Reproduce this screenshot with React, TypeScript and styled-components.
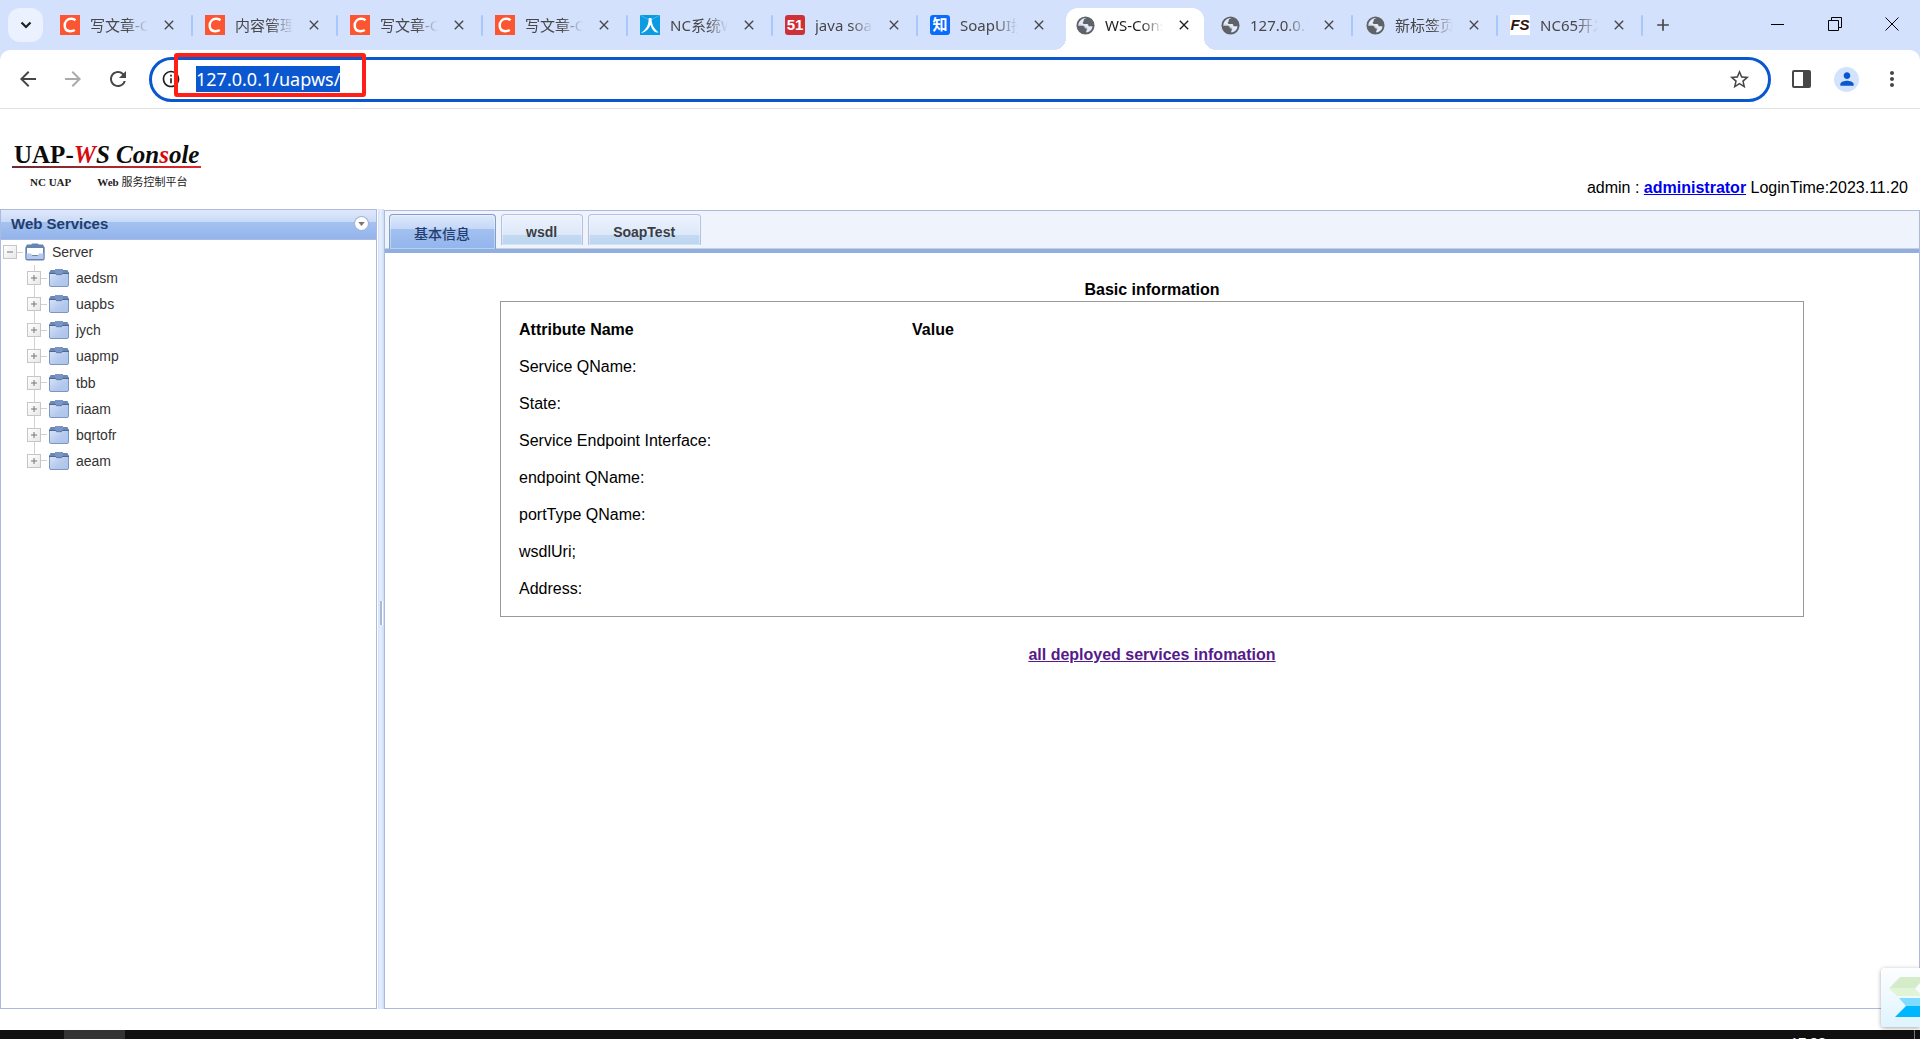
import React from "react";
import styled, { createGlobalStyle } from "styled-components";
import {
  MdAdd,
  MdArrowBack,
  MdArrowForward,
  MdClose,
  MdInfoOutline,
  MdMoreVert,
  MdPerson,
  MdRefresh,
  MdStarBorder,
} from "react-icons/md";

const UI_FONT = `"Noto Sans", "Noto Sans CJK SC", sans-serif`;
const PAGE_FONT = `"Liberation Sans", "Noto Sans CJK SC", sans-serif`;
const SERIF_FONT = `"Liberation Serif", "Noto Sans CJK SC", serif`;

const LINE = "#aeb9e0";
const SOFT_LINE = "#b9bfe2";

const Global = createGlobalStyle`
  *, *::before, *::after { box-sizing: border-box; }
  body { margin: 0; background: #fff; font-family: ${PAGE_FONT}; color: #000; }
  button { border: 0; padding: 0; background: none; font: inherit; color: inherit; }
`;

const Screen = styled.div`
  display: flex;
  flex-direction: column;
  height: 100vh;
  overflow: hidden;
`;

/* ---------- browser chrome ---------- */

const TabStrip = styled.div`
  display: flex;
  align-items: stretch;
  flex: none;
  height: 50px;
  padding-left: 8px;
  background: #d3e1fd;
`;

const TabSearch = styled.button`
  display: grid;
  place-items: center;
  flex: none;
  width: 35px;
  height: 34px;
  margin: 8px 5px 0 0;
  border-radius: 12px;
  background: #ebf1fe;
`;

const Tab = styled.div<{ $active?: boolean; $divider?: boolean }>`
  position: relative;
  display: flex;
  align-items: center;
  flex: 0 1 145px;
  min-width: 0;
  height: 50px;
  padding: 0 8px 0 12px;
  isolation: isolate;
  color: ${(p) => (p.$active ? "#1f1f1f" : "#474747")};

  &::before {
    content: "";
    position: absolute;
    z-index: -1;
    display: ${(p) => (p.$active ? "block" : "none")};
    inset: 8px 4px 0 3px;
    border-radius: 12px 12px 0 0;
    background: #fff;
  }

  &::after {
    content: "";
    position: absolute;
    z-index: -1;
    ${(p) =>
      p.$active
        ? `
      bottom: 0; left: -9px; right: -8px; height: 12px;
      background:
        radial-gradient(circle at 0 0, transparent 12px, #fff 12px) left / 12px 12px no-repeat,
        radial-gradient(circle at 100% 0, transparent 12px, #fff 12px) right / 12px 12px no-repeat;`
        : `
      display: ${p.$divider ? "block" : "none"};
      top: 15px; right: 0; width: 2px; height: 21px;
      border-radius: 1px;
      background: #a8c7fa;`}
  }
`;

const Favicon = styled.span`
  display: grid;
  place-items: center;
  flex: none;
  width: 20px;
  height: 20px;
  margin-right: 10px;
`;

const TabTitle = styled.span`
  flex: 1;
  min-width: 0;
  overflow: hidden;
  white-space: nowrap;
  font: 15px/24px ${UI_FONT};
  mask-image: linear-gradient(90deg, #000 62%, transparent 100%);
`;

const TabClose = styled.button`
  display: grid;
  place-items: center;
  flex: none;
  width: 16px;
  height: 20px;
  margin: 0 8px 0 13px;
`;

const NewTab = styled.button`
  display: grid;
  place-items: center;
  width: 40px;
  height: 50px;
  color: #474747;
`;

const WindowButtons = styled.div`
  display: flex;
  margin-left: auto;
`;

const WindowButton = styled.button`
  display: grid;
  place-items: center;
  width: 57px;
  height: 48px;
`;

const Toolbar = styled.div`
  display: flex;
  align-items: center;
  flex: none;
  height: 59px;
  padding: 0 6px 0 5px;
  border-bottom: 1px solid #dfe1e5;
  background: #fff;
  box-shadow: 0 -8px 0 #d3e1fd;
  border-radius: 10px 10px 0 0;
`;

const ToolButton = styled.button<{ $muted?: boolean }>`
  display: grid;
  place-items: center;
  flex: none;
  width: 45px;
  height: 40px;
  color: ${(p) => (p.$muted ? "#aaa" : "#474747")};
`;

const Omnibox = styled.div`
  position: relative;
  display: flex;
  align-items: center;
  flex: 1;
  height: 45px;
  margin: 0 8px 0 9px;
  padding: 0 17px 0 9px;
  border: 3px solid #0b57d0;
  border-radius: 23px;
`;

const SiteInfo = styled.button`
  display: grid;
  width: 20px;
  height: 20px;
  margin-right: 15px;
  color: #1f1f1f;
`;

const Address = styled.input`
  field-sizing: content;
  height: 26px;
  margin-right: auto;
  padding: 0;
  border: 0;
  outline: 0;
  background: #0b57d0;
  color: #fff;
  font: 18px/26px ${UI_FONT};
`;

const BookmarkButton = styled.button`
  display: grid;
  color: #474747;
`;

/* red annotation frame drawn over the address */
const Highlight = styled.span`
  position: absolute;
  top: -7px;
  left: 22px;
  width: 192px;
  height: 44px;
  border: 4px solid #ff1f17;
  border-radius: 3px;
  pointer-events: none;
`;

const Avatar = styled.span`
  display: grid;
  place-items: center;
  width: 25px;
  height: 25px;
  border-radius: 50%;
  background: #d3e3fd;
  color: #0b57d0;
`;

/* ---------- console page ---------- */

const PageHeader = styled.header`
  display: flex;
  justify-content: space-between;
  align-items: flex-end;
  flex: none;
  height: 100px;
  padding: 0 12px;
`;

const Logo = styled.div`
  width: 189px;
  padding-bottom: 19px;
  font-family: ${SERIF_FONT};
  font-weight: bold;
`;

const LogoTitle = styled.div`
  padding-left: 2px;
  border-bottom: 2px solid;
  border-image: linear-gradient(90deg, #6b2a30, #e0262c) 1;
  font-size: 25px;
  line-height: 22px;
  white-space: nowrap;
  color: #0c0c0c;
`;

const Red = styled.span`
  color: #d9090f;
`;

const LogoSub = styled.div`
  display: flex;
  gap: 26px;
  padding: 6px 0 0 18px;
  font-size: 11px;
  line-height: 16px;
  white-space: nowrap;
  color: #222;
`;

const Chinese = styled.span`
  font-weight: normal;
`;

const Login = styled.div`
  padding-bottom: 11px;
  font-size: 16px;
  line-height: 20px;

  a { font-weight: bold; color: #00e; }
`;

const Workspace = styled.main`
  display: flex;
  flex: 1;
  min-height: 0;
  margin-bottom: 21px;
`;

const Sidebar = styled.nav`
  flex: none;
  width: 377px;
  border: 1px solid ${LINE};
`;

const SidebarHeader = styled.div`
  display: flex;
  justify-content: space-between;
  align-items: center;
  height: 30px;
  padding: 0 8px 2px 10px;
  border-bottom: 1px solid ${LINE};
  background: linear-gradient(#dfe8fa, #c8daf8 43%, #a4c2f0 43%, #92b4ec);
`;

const SidebarTitle = styled.h2`
  margin: 0;
  font-size: 15px;
  line-height: 20px;
  color: #233d6d;
`;

const CollapseButton = styled.button`
  display: grid;
  place-items: center;
  width: 13px;
  height: 13px;
  border-radius: 50%;
  background: #fff;
  box-shadow: 0 0 0 1px #a7b4cf;
`;

const Tree = styled.ul`
  display: grid;
  grid-auto-rows: 1fr;
  height: 235px;
  margin: -1px 0 0;
  padding: 0;
  list-style: none;
`;

const TreeRow = styled.li<{ $child?: boolean }>`
  position: relative;
  display: flex;
  align-items: center;
  padding-left: ${(p) => (p.$child ? 26 : 2)}px;
  font-size: 14px;
  color: #333;

  &::before {
    content: "";
    position: absolute;
    display: ${(p) => (p.$child ? "block" : "none")};
    top: 0;
    bottom: 0;
    left: 33px;
    width: 1px;
    background: #d2d2d2;
  }

  &:last-child::before { bottom: 50%; }
`;

const Toggle = styled.button`
  position: relative;
  display: grid;
  place-items: center;
  width: 14px;
  height: 14px;
  border: 1px solid #c6c6c6;
  background: linear-gradient(135deg, #fff, #e8e8e8);
`;

const Branch = styled.span`
  width: 6px;
  height: 1px;
  margin-right: 2px;
  background: #d2d2d2;
`;

const TreeLabel = styled.span`
  margin-left: 7px;
`;

const Splitter = styled.div`
  display: grid;
  place-items: center;
  flex: none;
  width: 6px;
  margin-left: 1px;
  padding-top: 8px;
  background: linear-gradient(90deg, #d3e0f7, #e9f0fd 40%, #cbdcf6);
`;

const Grip = styled.span`
  width: 3px;
  height: 24px;
  border-right: 1px solid #fff;
  background: #aabad6;
`;

const Content = styled.section`
  flex: 1;
  min-width: 0;
  margin-top: 1px;
  border: 1px solid ${LINE};
`;

const ContentTabs = styled.div`
  display: flex;
  align-items: flex-start;
  gap: 5px;
  height: 42px;
  padding: 3px 4px 0;
  border-bottom: 4px solid #8fb0df;
  background: #eff3fc;
  box-shadow: inset 0 -1px 0 #c9cfdb;
`;

const ContentTab = styled.button<{ $active?: boolean }>`
  height: ${(p) => (p.$active ? 35 : 31)}px;
  padding: 3px 25px 0 24px;
  border: 1px solid ${(p) => (p.$active ? "#829fca" : SOFT_LINE)};
  border-bottom: 0;
  border-radius: 4px 4px 0 0;
  background: ${(p) =>
    p.$active
      ? "linear-gradient(#dfe8fa, #c4d7f7 42%, #a2c0f0 42%, #93b5ed)"
      : "linear-gradient(#eef2fd, #dce8f8 66%, #c4daf2 66%, #bcd5ef)"};
  box-shadow: inset 0 0 0 1px rgba(255, 255, 255, 0.35);
  font-size: 14px;
  font-weight: ${(p) => (p.$active ? 500 : "bold")};
  line-height: 20px;
  color: ${(p) => (p.$active ? "#233d6d" : "#3a3d44")};
`;

const Info = styled.div`
  width: 85%;
  margin: 0 auto;
  padding-top: 27px;
  font-size: 16px;
  line-height: 20px;
  text-align: center;
`;

const InfoTitle = styled.h3`
  margin: 0;
  font-size: 16px;
  line-height: 20px;
`;

const InfoBox = styled.div`
  margin: 1px 0 28px;
  padding: 9px 17px;
  border: 1px solid #999;
`;

const InfoTable = styled.table`
  width: 100%;
  border-collapse: collapse;
  table-layout: fixed;
  text-align: left;

  th, td { height: 37px; padding: 0 1px; font-size: 16px; line-height: 20px; }
  th:first-child { width: 31%; }
`;

const DeployedLink = styled.a`
  font-weight: bold;
  color: #551a8b;
`;

const Widget = styled.button`
  position: fixed;
  right: 0;
  bottom: 12px;
  width: 39px;
  height: 59px;
  overflow: hidden;
  border-radius: 4px 0 0 4px;
  background: linear-gradient(#fdfeff, #dff4ff);
  box-shadow: 0 1px 4px rgba(0, 0, 0, 0.35);
`;

const Taskbar = styled.footer`
  display: flex;
  flex: none;
  height: 9px;
  overflow: hidden;
  background: #101010;
`;

const TaskbarApp = styled.span`
  width: 61px;
  margin-left: 64px;
  background: #333;
`;

const Clock = styled.time`
  margin: 3px 88px 0 auto;
  font: 14px/20px ${UI_FONT};
  color: #fff;
`;

const ShowDesktop = styled.span`
  width: 6px;
  border-left: 1px solid #777;
`;

/* ---------- drawings ---------- */

const GlobeIcon = () => (
  <svg width="19" height="19" viewBox="0 0 20 20" aria-hidden="true">
    <circle cx="10" cy="10" r="9.5" fill="#5f6368" />
    <path
      fill="#e4eafa"
      d="M11 2.500c-2 .2-3.300 1.200-2.900 2.400.2.900-.9 1.300-1 2.200 0 1 .9 1.300 2 1.300h2.700c1 0 1.300.8 1.200 1.600 0 .8.700 1 1.700.8 1-.2 1.800-.1 2.700.2-.4 3.200-3 5.900-6.300 6.300-.8-.7-.5-1.500 0-2.200.6-.9.100-1.800-.9-2-1.200-.2-1.400-1-1.600-1.800-.2-.8-1-.9-2-.9L2.500 10.400c-.1-3.700 1.500-5.400 3-6.500C7 2.800 9 2.300 11 2.500z"
    />
    <path
      fill="#5f6368"
      d="M3 9.500c1.800-.4 4-.3 5.500.5 1.300.7 1.300 1.900 2.500 2.200 1.500.4 1.300 2 .4 3l-1.700 3-4-1.200c-.2-1.500-.7-2.300-1.700-3.200C2.800 12.600 2.500 11 3 9.500z"
      opacity=".35"
    />
  </svg>
);

const CsdnIcon = () => (
  <svg width="20" height="20" viewBox="0 0 20 20" aria-hidden="true">
    <rect width="20" height="20" fill="#fc5531" />
    <path
      d="M15.500 5.200C14.300 4.200 13 3.800 11.300 3.800 7.300 3.800 4.700 6.700 4.700 10.600c0 3.400 2.100 5.600 5.600 5.600 1.700 0 3.200-.4 4.500-1.200"
      fill="none"
      stroke="#fff"
      strokeWidth="2.500"
    />
  </svg>
);

const PersonLogo = () => (
  <svg width="20" height="20" viewBox="0 0 20 20" aria-hidden="true">
    <rect width="20" height="20" fill="#0a9be3" />
    <path d="M0 0l9 5M20 0l-9 5" stroke="#5dc0f0" strokeWidth=".7" />
    <path
      fill="#fff"
      d="M8.700 3h2.800c.1 5.500 1.800 10.200 7 14.300-1.500.3-2.700.2-3.500-.3-2.300-2-3.800-4.400-4.600-7.300C9.400 13.200 6.800 16 2 18l-.6-.5C6.500 14 8.800 9.500 8.700 3z"
    />
  </svg>
);

const Badge = styled.span<{ $bg: string; $fg: string; $size: number }>`
  display: grid;
  place-items: center;
  width: 20px;
  height: 20px;
  border-radius: 3px;
  background: ${(p) => p.$bg};
  color: ${(p) => p.$fg};
  font: bold ${(p) => p.$size}px/20px ${PAGE_FONT};
`;

const ScriptBadge = styled(Badge)`
  border-radius: 0;
  font-style: italic;
`;

const ServerIcon = () => (
  <svg width="20" height="18" viewBox="0 0 20 18" aria-hidden="true">
    <path d="M2 1.500h4L7.500.5h5l1.500 1h4l1.700 3v11a2 2 0 0 1-2 2H2.300a2 2 0 0 1-2-2v-11z" fill="#6684b3" />
    <path d="M2 5h16v7H2z" fill="#fff" />
    <path d="M1.500 10.500H6l1.500 2.500h5l1.500-2.500h4.500V16h-17z" fill="#b4c9ec" />
  </svg>
);

const FolderIcon = () => (
  <svg width="20" height="18" viewBox="0 0 20 18" aria-hidden="true">
    <defs>
      <linearGradient id="folderFill" x1="0" y1="0" x2="1" y2="1">
        <stop offset="0" stopColor="#dbe6f9" />
        <stop offset=".6" stopColor="#b4c9ed" />
        <stop offset="1" stopColor="#adc3ea" />
      </linearGradient>
    </defs>
    <rect x=".5" y="2.500" width="19" height="15" rx="1.500" fill="url(#folderFill)" stroke="#7c96bf" />
    <path d="M1.500 1h17l1.500 4H0z" fill="#6a88b6" />
    <path d="M0 4.500h20" stroke="#4f6993" />
    <path d="M6 0h8v4l-1.500 1.700h-5L6 4z" fill="#7895c6" />
    <path d="M6 4l1.500 1.700h5L14 4" fill="none" stroke="#4f6993" strokeWidth=".8" />
  </svg>
);

const SidePanelIcon = () => (
  <svg width="19" height="18" viewBox="0 0 19 18" aria-hidden="true">
    <rect x="1" y="1" width="17" height="16" rx="1" fill="none" stroke="#474747" strokeWidth="2" />
    <path d="M11 1h7v16h-7z" fill="#474747" />
  </svg>
);

/* ---------- data ---------- */

const browserTabs: { title: string; icon: React.ReactNode; active?: boolean }[] = [
  { title: "写文章-CSDN", icon: <CsdnIcon /> },
  { title: "内容管理-CSDN", icon: <CsdnIcon /> },
  { title: "写文章-CSDN", icon: <CsdnIcon /> },
  { title: "写文章-CSDN", icon: <CsdnIcon /> },
  { title: "NC系统WS", icon: <PersonLogo /> },
  { title: "java soap", icon: <Badge $bg="#cf2f37" $fg="#fff" $size={15}>51</Badge> },
  { title: "SoapUI接口", icon: <Badge $bg="#0a6cff" $fg="#fff" $size={15}>知</Badge> },
  { title: "WS-Console", icon: <GlobeIcon />, active: true },
  { title: "127.0.0.1", icon: <GlobeIcon /> },
  { title: "新标签页", icon: <GlobeIcon /> },
  { title: "NC65开发", icon: <ScriptBadge $bg="#fff" $fg="#32130c" $size={15}>FS</ScriptBadge> },
];

const services = ["aedsm", "uapbs", "jych", "uapmp", "tbb", "riaam", "bqrtofr", "aeam"];

const attributes = [
  "Service QName:",
  "State:",
  "Service Endpoint Interface:",
  "endpoint QName:",
  "portType QName:",
  "wsdlUri;",
  "Address:",
];

const ToggleMark = ({ open }: { open?: boolean }) => (
  <svg width="8" height="8" viewBox="0 0 8 8" aria-hidden="true">
    <path d={open ? "M1 4h6" : "M1 4h6M4 1v6"} stroke="#777" strokeWidth="1" />
  </svg>
);

export default function App() {
  return (
    <Screen>
      <Global />
      <TabStrip>
        <TabSearch aria-label="Search tabs">
          <svg width="12" height="8" viewBox="0 0 12 8" aria-hidden="true">
            <path d="M1.500 1.500L6 6l4.500-4.500" fill="none" stroke="#1f1f1f" strokeWidth="2.200" />
          </svg>
        </TabSearch>
        {browserTabs.map((tab, i) => (
          <Tab key={i} $active={tab.active} $divider={!browserTabs[i + 1]?.active}>
            <Favicon>{tab.icon}</Favicon>
            <TabTitle>{tab.title}</TabTitle>
            <TabClose aria-label="Close tab">
              <MdClose size={16} />
            </TabClose>
          </Tab>
        ))}
        <NewTab aria-label="New tab">
          <MdAdd size={20} />
        </NewTab>
        <WindowButtons>
          <WindowButton aria-label="Minimize">
            <svg width="14" height="14" viewBox="0 0 14 14"><path d="M0 7.500h13" stroke="#000" /></svg>
          </WindowButton>
          <WindowButton aria-label="Restore">
            <svg width="14" height="14" viewBox="0 0 14 14">
              <path d="M.5 3.500h10v10H.5zM3.500 3V.5h10v10H11" fill="none" stroke="#000" />
            </svg>
          </WindowButton>
          <WindowButton aria-label="Close">
            <svg width="14" height="14" viewBox="0 0 14 14"><path d="M.5.5l13 13M13.500.5l-13 13" stroke="#000" /></svg>
          </WindowButton>
        </WindowButtons>
      </TabStrip>

      <Toolbar>
        <ToolButton aria-label="Back"><MdArrowBack size={24} /></ToolButton>
        <ToolButton aria-label="Forward" $muted><MdArrowForward size={24} /></ToolButton>
        <ToolButton aria-label="Reload"><MdRefresh size={24} /></ToolButton>
        <Omnibox>
          <SiteInfo aria-label="Site information"><MdInfoOutline size={20} /></SiteInfo>
          <Address aria-label="Address" defaultValue="127.0.0.1/uapws/" />
          <BookmarkButton aria-label="Bookmark"><MdStarBorder size={23} /></BookmarkButton>
          <Highlight />
        </Omnibox>
        <ToolButton aria-label="Side panel"><SidePanelIcon /></ToolButton>
        <ToolButton aria-label="Profile"><Avatar><MdPerson size={20} /></Avatar></ToolButton>
        <ToolButton aria-label="Menu"><MdMoreVert size={24} /></ToolButton>
      </Toolbar>

      <PageHeader>
        <Logo>
          <LogoTitle>
            UAP-<i><Red>W</Red>S Con<Red>s</Red>ole</i>
          </LogoTitle>
          <LogoSub>
            <span>NC UAP</span>
            <span>Web <Chinese>服务控制平台</Chinese></span>
          </LogoSub>
        </Logo>
        <Login>
          admin : <a href="#administrator">administrator</a> LoginTime:2023.11.20
        </Login>
      </PageHeader>

      <Workspace>
        <Sidebar>
          <SidebarHeader>
            <SidebarTitle>Web Services</SidebarTitle>
            <CollapseButton aria-label="Collapse">
              <svg width="7" height="4" viewBox="0 0 8 5"><path d="M0 0h8L4 5z" fill="#777" /></svg>
            </CollapseButton>
          </SidebarHeader>
          <Tree>
            <TreeRow>
              <Toggle aria-label="Collapse Server"><ToggleMark open /></Toggle>
              <Branch />
              <ServerIcon />
              <TreeLabel>Server</TreeLabel>
            </TreeRow>
            {services.map((name) => (
              <TreeRow key={name} $child>
                <Toggle aria-label={`Expand ${name}`}><ToggleMark /></Toggle>
                <Branch />
                <FolderIcon />
                <TreeLabel>{name}</TreeLabel>
              </TreeRow>
            ))}
          </Tree>
        </Sidebar>
        <Splitter><Grip /></Splitter>
        <Content>
          <ContentTabs>
            <ContentTab $active>基本信息</ContentTab>
            <ContentTab>wsdl</ContentTab>
            <ContentTab>SoapTest</ContentTab>
          </ContentTabs>
          <Info>
            <InfoTitle>Basic information</InfoTitle>
            <InfoBox>
              <InfoTable>
                <thead>
                  <tr>
                    <th>Attribute Name</th>
                    <th>Value</th>
                  </tr>
                </thead>
                <tbody>
                  {attributes.map((name) => (
                    <tr key={name}>
                      <td>{name}</td>
                      <td />
                    </tr>
                  ))}
                </tbody>
              </InfoTable>
            </InfoBox>
            <DeployedLink href="#services">all deployed services infomation</DeployedLink>
          </Info>
        </Content>
      </Workspace>

      <Widget aria-label="Assistant">
        <svg width="39" height="59" viewBox="0 0 39 59" aria-hidden="true">
          <path d="M8 20.500L19 9h20v11.500z" fill="#d5ecca" />
          <path d="M8 20.500h31V28H16z" fill="#e0f4d6" />
          <path d="M39 15l-5 5.500 5 5z" fill="#f6fcff" />
          <path d="M18 30h21v8H25z" fill="#80dcff" />
          <path d="M25 38h14v11H14z" fill="#00b6ff" />
        </svg>
      </Widget>

      <Taskbar>
        <TaskbarApp />
        <Clock>17:28</Clock>
        <ShowDesktop />
      </Taskbar>
    </Screen>
  );
}
